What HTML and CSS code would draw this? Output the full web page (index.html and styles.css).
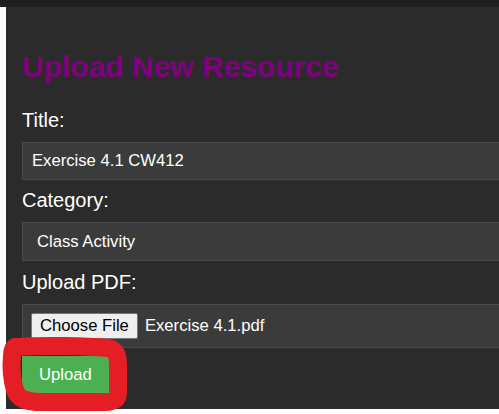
FILE: index.html
```html
<!DOCTYPE html>
<html lang="en">
<head>
<meta charset="utf-8">
<title>Upload New Resource</title>
<link rel="stylesheet" href="styles.css">
</head>
<body>
<div class="topbar"></div>
<main class="panel">
  <h2 class="heading">Upload New Resource</h2>
  <form class="form">
    <label class="label" for="title">Title:</label>
    <input class="field text" id="title" type="text" value="Exercise 4.1 CW412">
    <label class="label" for="cat">Category:</label>
    <select class="field select" id="cat">
      <option>Class Activity</option>
    </select>
    <label class="label">Upload PDF:</label>
    <div class="field filebox">
      <span class="choose">Choose File</span>
      <span class="filename">Exercise 4.1.pdf</span>
    </div>
    <button class="submit" type="button">Upload</button>
  </form>
</main>
<svg class="annot" width="499" height="414" viewBox="0 0 499 414">
  <path d="M15 347 C 45 345, 85 346, 108 348 C 117 350, 118 356, 118 366 L 118 392 C 118 400, 114 402, 104 402 L 42 402 C 26 402, 18 399, 15 390 C 12 380, 11 366, 12 356 C 12 350, 13 348, 15 347 Z" />
</svg>
</body>
</html>
```
FILE: styles.css
```css
html, body {
  margin: 0;
  padding: 0;
}
body {
  background: #ffffff;
  width: 499px;
  height: 414px;
  overflow: hidden;
  position: relative;
  font-family: "Liberation Sans", Arial, sans-serif;
}
.topbar {
  height: 7px;
  background: #1f1f1f;
}
.panel {
  margin-left: 6px;
  width: 600px;
  height: 402px;
  box-sizing: border-box;
  background: #2b2b2b;
  padding: 18px 16px 16px 16px;
}
.heading {
  margin: 25px 0 25px 0;
  font-size: 30px;
  line-height: 34px;
  font-weight: bold;
  color: #800080;
}
.form {
  display: flex;
  flex-direction: column;
  align-items: flex-start;
}
.label {
  display: block;
  font-size: 20px;
  line-height: 23px;
  color: #ffffff;
  margin-bottom: 10px;
}
.field {
  width: 100%;
  box-sizing: border-box;
  height: 38px;
  margin: 0 0 10px 0;
  padding: 0 9px;
  background: #3b3b3b;
  border: 1px solid #4a4a4a;
  border-radius: 0;
  color: #ffffff;
  font-family: "Liberation Sans", Arial, sans-serif;
  font-size: 16.67px;
  outline: none;
}
.text {
  margin-bottom: 9px;
}
.select {
  appearance: none;
  -webkit-appearance: none;
  height: 39px;
  padding-left: 14px;
}
.filebox {
  height: 44px;
  display: flex;
  align-items: center;
  padding: 0 8px;
  margin-bottom: 8px;
}
.choose {
  height: 26px;
  box-sizing: border-box;
  display: flex;
  align-items: center;
  padding: 0 8px;
  background: #efefef;
  border: 1px solid #767676;
  border-radius: 2px;
  color: #000000;
  font-size: 16.67px;
}
.filename {
  margin-left: 7px;
  color: #ffffff;
  font-size: 16.67px;
}
.submit {
  height: 37px;
  padding: 0 17px;
  background: #4caf50;
  border: none;
  color: #ffffff;
  font-family: "Liberation Sans", Arial, sans-serif;
  font-size: 16.67px;
}
.annot {
  position: absolute;
  left: 0;
  top: 0;
  pointer-events: none;
}
.annot path {
  fill: none;
  stroke: #e41e24;
  stroke-width: 18;
  stroke-linejoin: round;
  stroke-linecap: round;
}
```
